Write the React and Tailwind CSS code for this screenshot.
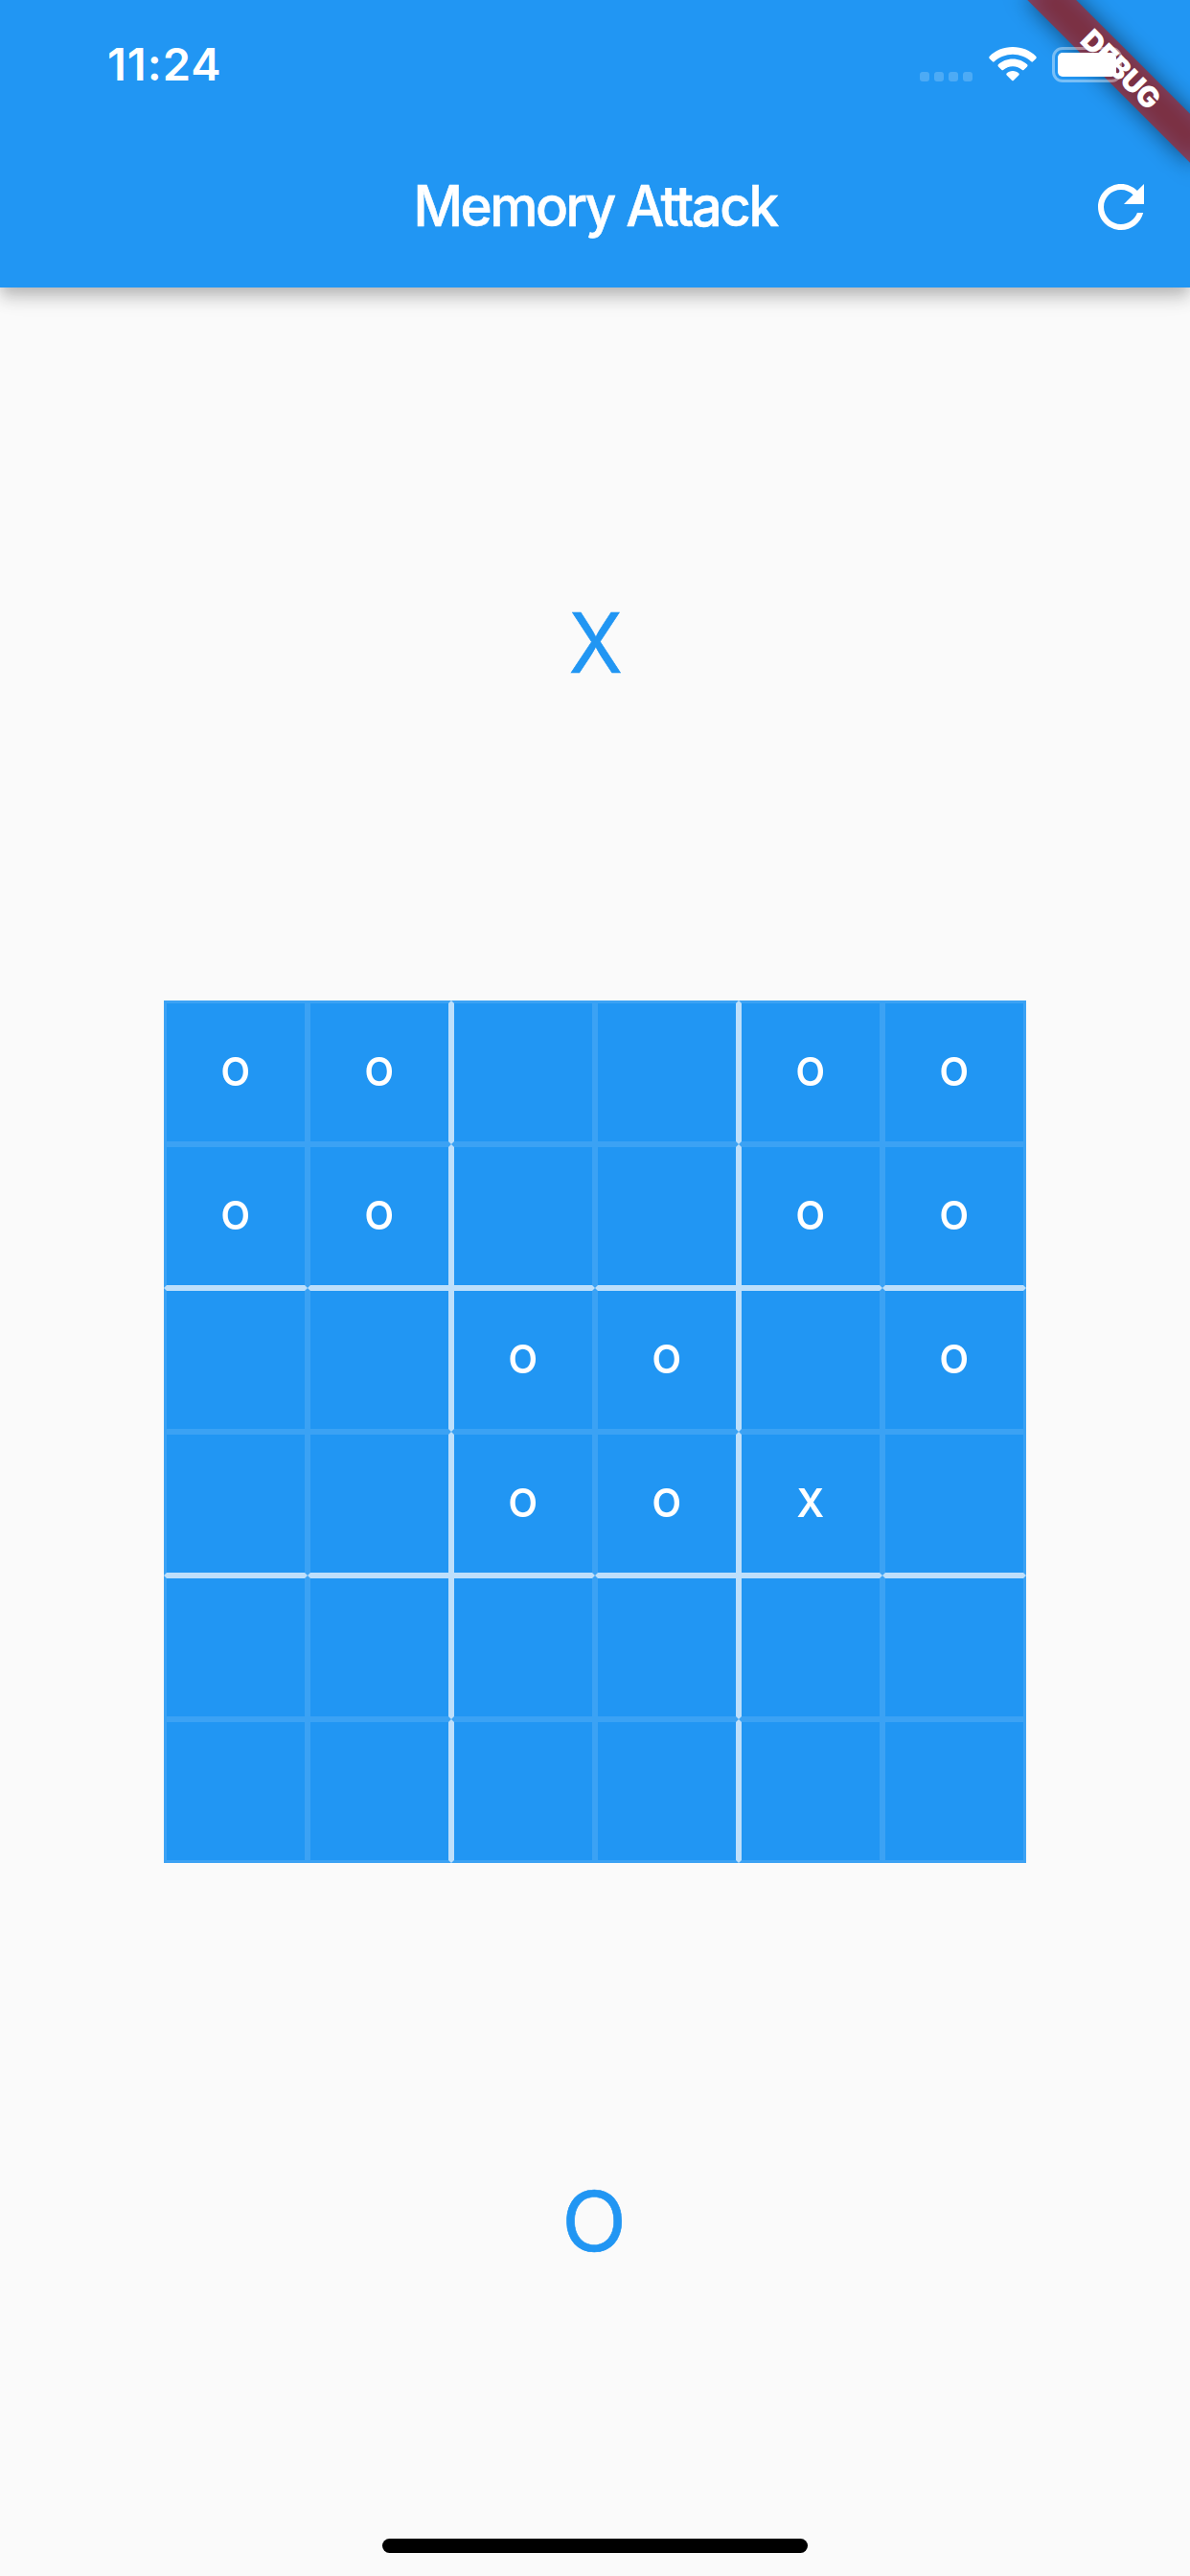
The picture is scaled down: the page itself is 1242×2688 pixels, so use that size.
const MARKS = [
  "OO..OO",
  "OO..OO",
  "..OO.O",
  "..OOX.",
  "......",
  "......",
];

function Cell({ row, col, mark }) {
  const strong = "rgba(255,255,255,0.7)";
  const faint = "rgba(255,255,255,0.12)";
  const edges = {
    borderLeftColor: col === 2 || col === 4 ? strong : faint,
    borderRightColor: col === 1 || col === 3 ? strong : faint,
    borderTopColor: row === 2 || row === 4 ? strong : faint,
    borderBottomColor: row === 1 || row === 3 ? strong : faint,
  };
  return (
    <div
      className="flex items-center justify-center border-[3px] bg-[#2196f3] pb-[2px] text-[41px] leading-none font-semibold text-white"
      style={edges}
    >
      {mark !== "." && <span className="inline-block scale-x-[0.97]">{mark}</span>}
    </div>
  );
}

function Wifi() {
  return (
    <svg className="ml-[17px] h-[36px] w-[50px]" viewBox="0 0 50 36" fill="#fff">
      <path d="M25 0C34.6 0 43.4 3.7 49.2 9.7Q50.3 11 49.2 12.2L46 15.3Q45.2 16 44.3 15.2C39 10.5 32.3 7.7 25 7.7S11 10.5 5.7 15.2Q4.8 16 4 15.3L.8 12.2Q-.3 11 .8 9.700C6.6 3.7 15.4 0 25 0Z" />
      <path d="M25 12.4C31 12.4 36.3 14.6 40.1 18.2Q41.1 19.3 40.1 20.4L36.5 24Q35.7 24.7 34.9 24C32.2 21.7 28.8 20.2 25 20.2S17.8 21.7 15.1 24Q14.3 24.7 13.5 24L9.9 20.4Q8.9 19.3 9.9 18.2C13.7 14.6 19 12.4 25 12.4Z" />
      <path d="M25 25C27.5 25 29.8 25.9 31.4 27.5Q32.2 28.5 31.3 29.4L25.8 35Q25 35.7 24.2 35L18.7 29.4Q17.8 28.5 18.6 27.5C20.2 25.9 22.5 25 25 25Z" />
    </svg>
  );
}

function DebugBanner() {
  return (
    <div className="absolute right-0 top-0 h-[220px] w-[220px] overflow-hidden">
      <div className="absolute left-[220px] top-0 h-0 w-0 rotate-45">
        <div className="absolute -left-[120px] top-[84px] h-[36px] w-[240px] bg-black/50 blur-[12px]" />
        <div className="absolute -left-[120px] top-[84px] flex h-[36px] w-[240px] items-center justify-center bg-[#b71c1c]/63 text-[30px] leading-none font-black tracking-[-0.4px] text-white">
          <span>DEBUG</span>
        </div>
      </div>
    </div>
  );
}

export default function App() {
  return (
    <div className="relative flex h-[2688px] w-[1242px] flex-col overflow-hidden bg-[#fafafa] font-['Inter',sans-serif]">
      <header className="relative h-[300px] bg-[#2196f3] shadow-[0_6px_12px_-3px_rgba(0,0,0,0.1),0_12px_15px_0_rgba(0,0,0,0.14),0_3px_30px_0_rgba(0,0,0,0.1)]">
        <DebugBanner />
        <div className="relative flex h-[132px] items-start justify-between">
          <span className="ml-[112px] mt-[38px] text-[47px] leading-[57px] font-semibold tracking-[1px] text-white">11:24</span>
          <div className="mt-[49px] mr-[64px] flex">
            <div className="mt-[26px] flex gap-[5px]">
              {[0, 1, 2, 3].map((i) => (
                <span key={i} className="size-[10px] rounded-[3px] bg-white/20" />
              ))}
            </div>
            <Wifi />
            <div className="ml-[16px] h-[37px] w-[73px] rounded-[11px] border-[3px] border-white/40 p-[3px]">
              <div className="h-full w-full rounded-[5px] bg-white" />
            </div>
            <div className="mt-[13px] ml-[3px] h-[12px] w-[4px] rounded-r-full bg-white/40" />
          </div>
        </div>
        <div className="grid h-[168px] grid-cols-[144px_1fr_144px] items-center">
          <h1 className="col-start-2 scale-x-[0.957] pb-[3px] text-center text-[59px] leading-none font-medium tracking-[-2.6px] text-white [-webkit-text-stroke:0.6px_white]">Memory Attack</h1>
          <button className="flex h-[168px] items-center justify-center" aria-label="Restart">
            <svg className="size-[72px]" viewBox="0 0 24 24" fill="#fff">
              <path d="M17.65 6.35C16.2 4.9 14.21 4 12 4c-4.42 0-7.99 3.58-7.99 8s3.57 8 7.99 8c3.73 0 6.84-2.55 7.73-6h-2.08c-.82 2.33-3.04 4-5.65 4-3.31 0-6-2.69-6-6s2.69-6 6-6c1.66 0 3.14.69 4.22 1.78L13 11h7V4l-2.35 2.35z" />
            </svg>
          </button>
        </div>
      </header>
      <main className="flex flex-1 flex-col items-center">
        <div className="flex h-[744px] items-center justify-center pb-[3px] pl-[2px] text-[87px] leading-none text-[#2196f3] [-webkit-text-stroke:0.6px_#2196f3]">
          <span className="inline-block scale-x-[0.945]">X</span>
        </div>
        <div className="grid h-[900px] w-[900px] grid-cols-6 grid-rows-6">
          {MARKS.flatMap((line, row) =>
            [...line].map((mark, col) => <Cell key={`${row}-${col}`} row={row} col={col} mark={mark} />)
          )}
        </div>
        <div className="flex h-[705px] items-center justify-center pr-[2px] pt-[41px] text-[87px] leading-none text-[#2196f3] [-webkit-text-stroke:0.6px_#2196f3]">
          <span className="inline-block scale-x-[1.02]">O</span>
        </div>
        <div className="h-[15px] w-[444px] rounded-full bg-black" />
      </main>
    </div>
  );
}
